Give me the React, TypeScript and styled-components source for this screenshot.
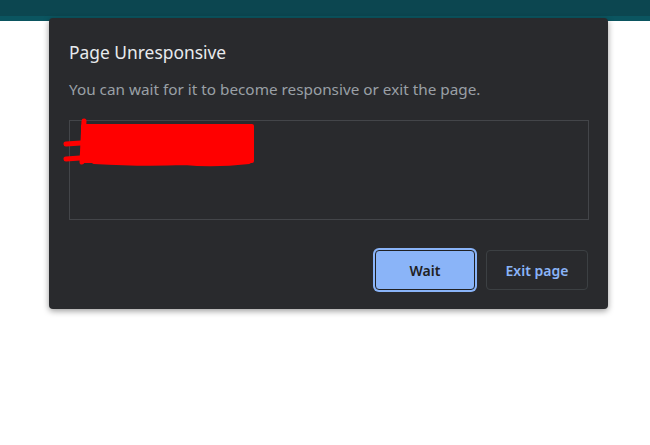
import styled, { createGlobalStyle } from 'styled-components';

const GlobalStyle = createGlobalStyle`
  html, body {
    margin: 0;
    padding: 0;
    background: #ffffff;
  }
  body {
    font-family: "Noto Sans", "Open Sans", sans-serif;
  }
`;

const Page = styled.div`
  width: 650px;
  height: 445px;
  position: relative;
  overflow: hidden;
`;

const TopBar = styled.div`
  height: 21px;
  background: linear-gradient(#0c4650 0, #0c4650 16px, #0b5560 16px);
`;

const Dialog = styled.div`
  position: absolute;
  top: 18px;
  left: 49px;
  width: 559px;
  box-sizing: border-box;
  padding: 22px 19px 19px 20px;
  background: #292a2d;
  border-radius: 4px;
  box-shadow: 0 2px 6px rgba(0, 0, 0, 0.4);
  display: flex;
  flex-direction: column;
`;

const Title = styled.h1`
  margin: 0;
  font-size: 17.4px;
  line-height: 25px;
  font-weight: 400;
  color: #e8eaed;
`;

const Message = styled.p`
  margin: 14px 0 0;
  font-size: 15.3px;
  line-height: 21px;
  color: #9aa0a6;
`;

const Details = styled.div`
  margin-top: 20px;
  height: 100px;
  box-sizing: border-box;
  border: 1px solid #434549;
  overflow: visible;
`;

const Redaction = styled.svg`
  display: block;
  margin: -3px 0 0 -6px;
  overflow: visible;
`;

const Actions = styled.div`
  margin-top: 30px;
  padding-right: 1px;
  display: flex;
  justify-content: flex-end;
  gap: 11px;
`;

const Button = styled.button<{ primary?: boolean }>`
  height: 40px;
  width: ${({ primary }) => (primary ? '100px' : '102px')};
  border-radius: 4px;
  font-family: "Noto Sans", "Open Sans", sans-serif;
  font-size: 14px;
  font-weight: 600;
  cursor: pointer;
  background: ${({ primary }) => (primary ? '#8ab4f8' : 'transparent')};
  color: ${({ primary }) => (primary ? '#202124' : '#8ab4f8')};
  border: 1px solid ${({ primary }) => (primary ? '#1f2023' : '#3c4043')};
  box-shadow: ${({ primary }) => (primary ? '0 0 0 2px #8ab4f8' : 'none')};
`;

export default function App() {
  return (
    <Page>
      <GlobalStyle />
      <TopBar />
      <Dialog>
        <Title>Page Unresponsive</Title>
        <Message>You can wait for it to become responsive or exit the page.</Message>
        <Details>
          <Redaction width="195" height="50" viewBox="0 0 195 50">
            <rect x="17" y="6" width="173" height="39" rx="2" fill="#ff0000" />
            <path d="M2 26 L32 24" stroke="#ff0000" strokeWidth="5" strokeLinecap="round" />
            <path d="M2 41 L30 39" stroke="#ff0000" strokeWidth="5" strokeLinecap="round" />
            <path d="M20 3 L18 44" stroke="#ff0000" strokeWidth="5" strokeLinecap="round" />
            <path d="M30 44 Q80 47 120 45 Q150 48 185 44" stroke="#ff0000" strokeWidth="4" fill="none" strokeLinecap="round" />
          </Redaction>
        </Details>
        <Actions>
          <Button primary>Wait</Button>
          <Button>Exit page</Button>
        </Actions>
      </Dialog>
    </Page>
  );
}
